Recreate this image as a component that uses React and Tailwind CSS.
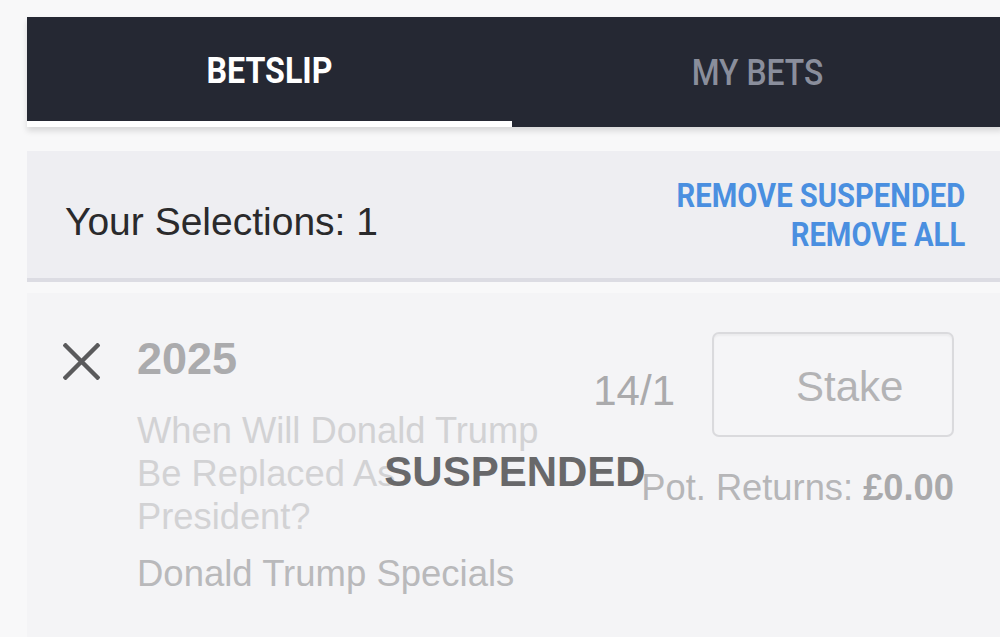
import React from "react";

const CloseIcon = () => (
  <svg width="37" height="37" viewBox="0 0 37 37" className="shrink-0 mt-[6px]">
    <path d="M2.5 2.5 L34.5 34.5 M34.5 2.5 L2.5 34.5" stroke="#5a5a5c" strokeWidth="4.4" strokeLinecap="square" fill="none" />
  </svg>
);

export default function App() {
  return (
    <div className="w-[1000px] h-[637px] overflow-hidden bg-[#f8f8f9] pt-[17px] pl-[27px] font-['Liberation_Sans',Arial,sans-serif]">
      <div className="w-[976px] shrink-0">
        {/* tabs */}
        <div className="flex h-[110px] bg-[#252833] shadow-[0_4px_6px_rgba(0,0,0,0.13)] font-['Roboto',sans-serif]">
          <div className="w-[485px] flex items-center justify-center border-b-[6px] border-white">
            <span className="inline-block text-[37px] leading-none font-bold text-white scale-x-[0.87] mt-[2px]">
              BETSLIP
            </span>
          </div>
          <div className="flex-1 flex items-center justify-center pb-[6px]">
            <span className="inline-block text-[37px] leading-none font-medium text-[#8a8e9c] scale-x-[0.86] mt-[6px]">
              MY BETS
            </span>
          </div>
        </div>

        {/* selections header */}
        <div className="mt-[24px] h-[131px] bg-[#eeeef2] border-b-4 border-[#dcdce3] flex items-center justify-between pl-[38px] pr-[38px]">
          <div className="text-[39px] leading-none text-[#2a2a2c] mt-[14px]">Your Selections: 1</div>
          <div className="flex flex-col items-end font-['Roboto',sans-serif] font-bold text-[#4a8fe0] text-[33px] leading-[39px]">
            <span className="inline-block scale-x-[0.885] origin-right">REMOVE SUSPENDED</span>
            <span className="inline-block scale-x-[0.885] origin-right">REMOVE ALL</span>
          </div>
        </div>

        {/* selection */}
        <div className="mt-[11px] relative h-[400px] bg-[#f4f4f6] flex pt-[44px] pl-[36px] pr-[49px]">
          <CloseIcon />
          <div className="ml-[37px] flex-1 flex flex-col">
            <div className="text-[45px] leading-[44px] font-bold text-[#ababad]">2025</div>
            <div className="mt-[28px] max-w-[425px] text-[36.3px] leading-[43px] text-[#d2d2d4]">
              When Will Donald Trump Be Replaced As President?
            </div>
            <div className="mt-[14px] text-[36.5px] leading-[43px] text-[#b9b9bb]">Donald Trump Specials</div>
          </div>
          <div className="flex flex-col items-end -mt-[5px]">
            <div className="flex items-start">
              <div className="mt-[38px] text-[42px] leading-[42px] text-[#aaaaac]">14/1</div>
              <div className="ml-[37px] w-[242px] h-[105px] border-2 border-[#dadadd] rounded-[7px] bg-[#f5f5f7] shadow-[inset_0_2px_2px_rgba(0,0,0,0.04)] flex items-center pl-[82px] pt-[4px]">
                <span className="text-[42px] leading-[42px] text-[#b3b3b5]">Stake</span>
              </div>
            </div>
            <div className="mt-[33px] text-[36.3px] leading-[36px] text-[#b6b6b8]">
              Pot. Returns: <span className="font-bold text-[#a9a9ab]">£0.00</span>
            </div>
          </div>
          <div className="absolute left-0 right-0 top-[158px] text-center text-[42px] leading-[42px] font-bold text-[#68686a]">
            SUSPENDED
          </div>
        </div>
      </div>
    </div>
  );
}
